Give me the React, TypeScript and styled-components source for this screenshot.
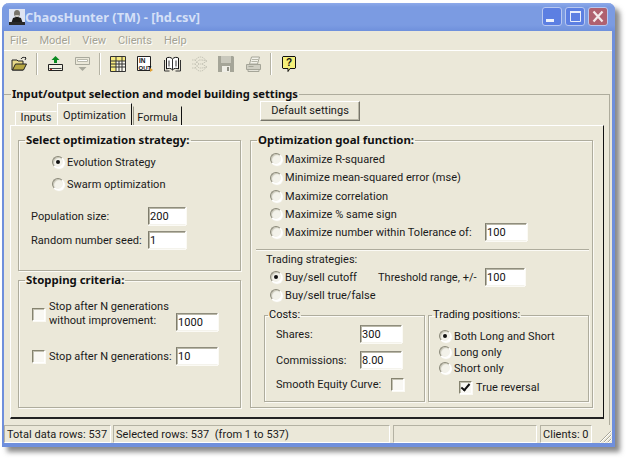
import React from 'react';
import styled, { createGlobalStyle } from 'styled-components';

const Global = createGlobalStyle`
    html, body {
        margin: 0;
        background: #ffffff;
    }
    body {
        font-family: Roboto, "Liberation Sans", sans-serif;
        font-size: 11px;
        letter-spacing: 0.03px;
        color: #1a1a1a;
    }
`;

const Page = styled.div`
    width: 629px;
    height: 462px;
    padding: 3px 0 0 2px;
    box-sizing: border-box;
    overflow: hidden;
`;

const Window = styled.div`
    width: 613px;
    height: 444px;
    box-sizing: border-box;
    display: flex;
    flex-direction: column;
    background: #ebe8d9;
    border-style: solid;
    border-color: #6f8fdc;
    border-width: 0 3px 4px 2px;
    border-radius: 7px 7px 0 0;
    box-shadow: 5px 5px 5px rgba(60, 60, 60, 0.6);
`;

const TitleBar = styled.div`
    height: 27px;
    flex: none;
    margin: 0 -3px 0 -2px;
    padding: 0 7px 1px 7px;
    display: flex;
    align-items: center;
    border-radius: 7px 7px 0 0;
    background: linear-gradient(#8eaaea 0, #7b9be2 4px, #7b9be2 22px, #6f90dc 100%);
`;

const TitleText = styled.span`
    font-family: "Noto Sans", sans-serif;
    font-size: 12.8px;
    font-weight: 700;
    letter-spacing: 0;
    color: #d5e0f7;
`;

const Controls = styled.div`
    margin-left: auto;
    display: flex;
    gap: 3px;
`;

const Control = styled.div<{ $close?: boolean }>`
    width: 20px;
    height: 19px;
    box-sizing: border-box;
    display: flex;
    align-items: center;
    justify-content: center;
    border: 1px solid #b8c8f0;
    border-radius: 3px;
    background: ${(p) => (p.$close ? '#b0616f' : '#5c7fe2')};
`;

const MenuBar = styled.div`
    height: 19px;
    flex: none;
    display: flex;
    gap: 12px;
    padding-left: 6px;
    align-items: center;
`;

const MenuItem = styled.span`
    color: #a3a294;
    text-shadow: 1px 1px 0 #ffffff;
`;

const Toolbar = styled.div`
    height: 37px;
    flex: none;
    box-sizing: border-box;
    border-top: 1px solid #ffffff;
    padding: 5px 0 0 1.5px;
    display: flex;
    align-items: flex-start;
`;

const ToolButton = styled.div`
    width: 27px;
    height: 16px;
    display: flex;
    justify-content: center;
`;

const ToolSep = styled.div`
    width: 1px;
    height: 22px;
    margin: -3px 3.5px 0;
    background: #b5b3a4;
    border-right: 1px solid #ffffff;
`;

const MainGroup = styled.fieldset`
    flex: 1;
    min-height: 0;
    margin: 0 2px 0 0;
    padding: 0 0 0 6px;
    border: none;
    border-top: 1px solid #aeac9d;
    border-right: 1px solid #aeac9d;
    min-width: 0;
`;

const MainLegend = styled.legend`
    margin-left: 1px;
    padding: 0 1px;
    height: 14px;
    line-height: 14px;
    font-family: "Noto Sans", sans-serif;
    font-size: 11.2px;
    font-weight: 700;
    letter-spacing: 0;
    color: #111111;
`;

const TabStrip = styled.div`
    height: 24px;
    display: flex;
    align-items: flex-end;
    padding-left: 5px;
`;

const Tab = styled.div<{ $active?: boolean; $last?: boolean }>`
    box-sizing: border-box;
    text-align: center;
    height: ${(p) => (p.$active ? 22 : p.$last ? 19 : 14)}px;
    line-height: ${(p) => (p.$active ? 23 : p.$last ? 21 : 12)}px;
    width: ${(p) => (p.$active ? 75 : p.$last ? 49 : 42)}px;
    margin-left: ${(p) => (p.$last ? 1 : 0)}px;
    border-top: 1px solid #ffffff;
    border-left: 1px solid #ffffff;
    border-right: 1px solid ${(p) => (p.$active || p.$last ? '#111111' : 'transparent')};
    border-top-color: ${(p) => (p.$last ? 'transparent' : '#ffffff')};
    border-left-color: ${(p) => (p.$last ? '#999888' : '#ffffff')};
`;

const DefaultButton = styled.div`
    margin: 0 0 4px 78px;
    width: 100px;
    height: 20px;
    box-sizing: border-box;
    text-align: center;
    line-height: 18px;
    border: 1px solid;
    border-color: #ffffff #77756a #77756a #ffffff;
    box-shadow: inset -1px -1px 0 #b8b6a6;
`;

const Panel = styled.div`
    width: 594px;
    height: 294px;
    box-sizing: border-box;
    padding: 7px 0 0 7px;
    display: flex;
    gap: 9px;
    border-top: 1px solid #ffffff;
    border-left: 1px solid #ffffff;
    border-right: 1px solid #111111;
    border-bottom: 2px solid #222222;
`;

const Column = styled.div`
    width: 223px;
    display: flex;
    flex-direction: column;
    gap: 2px;
`;

const Group = styled.fieldset<{ $w?: number; $h: number; $pad?: number }>`
    margin: 0;
    min-width: 0;
    width: ${(p) => (p.$w ? `${p.$w}px` : 'auto')};
    height: ${(p) => p.$h}px;
    box-sizing: border-box;
    padding: ${(p) => p.$pad ?? 0}px 0 0 0;
    border: 1px solid #aeac9d;
    box-shadow: 1px 1px 0 #fbfaf5, inset 1px 1px 0 #fbfaf5;
`;

const Legend = styled.legend<{ $plain?: boolean }>`
    margin-left: ${(p) => (p.$plain ? 3 : 6)}px;
    padding: 0 1px;
    height: 14px;
    line-height: 14px;
    font-family: ${(p) => (p.$plain ? 'inherit' : '"Noto Sans", sans-serif')};
    font-size: ${(p) => (p.$plain ? 11 : 11.4)}px;
    font-weight: ${(p) => (p.$plain ? 400 : 700)};
    letter-spacing: 0;
    color: #111111;
`;

const Row = styled.div<{ $h: number; $left: number; $right?: number; $top?: number }>`
    height: ${(p) => p.$h}px;
    margin-top: ${(p) => p.$top ?? 0}px;
    padding-left: ${(p) => p.$left}px;
    padding-right: ${(p) => p.$right ?? 0}px;
    display: flex;
    align-items: center;
`;

const Label = styled.span<{ $w?: number }>`
    flex: none;
    width: ${(p) => (p.$w ? `${p.$w}px` : 'auto')};
    white-space: nowrap;
`;

const Field = styled.input<{ $w: number; $auto?: boolean }>`
    width: ${(p) => p.$w}px;
    height: 18px;
    box-sizing: border-box;
    margin: 0;
    margin-left: ${(p) => (p.$auto ? 'auto' : '0')};
    padding: 1px 0 0 1px;
    font: inherit;
    letter-spacing: inherit;
    color: #111111;
    background: #ffffff;
    outline: none;
    border: 1px solid;
    border-color: #8f8d7d #ffffff #f4f3ec #7e7c6c;
    box-shadow: inset 1px 1px 0 #b9b7a8, 0 1px 0 #fbfaf5, 1px 0 0 #fbfaf5;
`;

const Radio = styled.input.attrs({ type: 'radio', readOnly: true })`
    appearance: none;
    flex: none;
    position: relative;
    width: 12px;
    height: 12px;
    margin: 0 3px 0 0;
    border-radius: 50%;
    border: 1px solid;
    border-color: #8a8878 #ffffff #ffffff #8a8878;
    background: #f3f2ea;
    box-shadow: 1px 1px 1px #ffffff, inset 1px 1px 1px #c6c4b5;
    &:checked::after {
        content: "";
        position: absolute;
        left: 3px;
        top: 3px;
        width: 4px;
        height: 4px;
        border-radius: 50%;
        background: #111111;
    }
`;

const Check = styled.input.attrs({ type: 'checkbox', readOnly: true })`
    appearance: none;
    flex: none;
    position: relative;
    width: 13px;
    height: 13px;
    margin: 0 4px 0 0;
    background: #f9f8f3;
    border: 1px solid;
    border-color: #85836f #ffffff #ffffff #85836f;
    box-shadow: inset 1px 1px 0 #c3c1b2, 1px 1px 0 #fbfaf5;
    &:checked::after {
        content: "";
        position: absolute;
        left: 3px;
        top: 0;
        width: 3px;
        height: 7px;
        border: solid #111111;
        border-width: 0 2px 2px 0;
        transform: rotate(40deg);
    }
`;

const StopRow = styled.div`
    height: 36px;
    padding: 0 22px 0 13px;
    display: flex;
    align-items: flex-start;
`;

const StopCheck = styled(Check)`
    margin-top: 8px;
`;

const StopText = styled.span`
    line-height: 14px;
    white-space: nowrap;
`;

const StopField = styled(Field)`
    margin-top: 13px;
`;

const Divider = styled.div`
    height: 1px;
    margin: 8px 3px 0 5px;
    background: #aeac9d;
    border-bottom: 1px solid #fbfaf5;
`;

const SubGroups = styled.div`
    display: flex;
    gap: 3px;
    margin: 4px 0 0 13px;
`;

const StatusBar = styled.div`
    height: 18px;
    flex: none;
    display: flex;
    gap: 2px;
    align-items: stretch;
`;

const StatusCell = styled.div<{ $w: number; $gap?: number }>`
    width: ${(p) => p.$w}px;
    margin-left: ${(p) => p.$gap ?? 0}px;
    box-sizing: border-box;
    padding-left: 2px;
    line-height: 17px;
    white-space: nowrap;
    border: 1px solid;
    border-color: #b4b2a3 #ffffff #ffffff #b4b2a3;
`;

const Grip = styled.div`
    margin-left: auto;
    align-self: flex-end;
    display: flex;
`;

const Open = () => (
    <svg width="17" height="16" viewBox="0 0 17 16">
        <path d="M1 4h5l1 1h5v9H1z" fill="#e7d98a" stroke="#222" />
        <path d="M1.500 14l3-6h11l-3 6z" fill="#b5a642" stroke="#222" />
        <path d="M10 3c1-2 3-2 5-1m0 0l-1-1m1 1l-1 2" fill="none" stroke="#222" />
    </svg>
);

const Upload = ({ off }: { off?: boolean }) => (
    <svg width="17" height="16" viewBox="0 0 17 16">
        {off ? (
            <>
                <path d="M1.500 1.500h14v7h-14z" fill="#ebe8d9" stroke="#a9a99c" />
                <path d="M3.500 3.500h10v2h-10z" fill="#ffffff" stroke="#b9b9ac" />
                <path d="M8.500 15l-4-4h8z" fill="#a9a99c" />
            </>
        ) : (
            <>
                <path d="M8.500 0l4 4h-2.500v3h-3v-3h-2.500z" fill="#0a8a20" />
                <path d="M1.500 8.500h14v6h-14z" fill="#f3f1e4" stroke="#222" />
                <path d="M2.500 12.500h12" stroke="#444" />
                <path d="M3 13h2v1h-2z" fill="#c02020" />
            </>
        )}
    </svg>
);

const Grid = () => (
    <svg width="16" height="16" viewBox="0 0 16 16">
        <path d="M.5.500h15v15H.5z" fill="#fbfaf0" />
        <path d="M1 1h5v14H1zM6 1h9v4H6z" fill="#f6ea80" />
        <path d="M.5.500h15v15H.5zM.5 5h15M.5 8h15M.5 11h15M6 .5v15M9 5v10.500M12 .5v15" fill="none" stroke="#333" strokeWidth="1" />
    </svg>
);

const InOut = () => (
    <svg width="16" height="16" viewBox="0 0 16 16">
        <path d="M.5.500h13v14H.5z" fill="#fff" stroke="#222" />
        <text x="2" y="7" fontSize="6.500" fontWeight="700" fontFamily="Liberation Sans, sans-serif" fill="#111">IN</text>
        <text x="1.500" y="13.500" fontSize="6" fontWeight="700" fontFamily="Liberation Sans, sans-serif" fill="#111">OUT</text>
        <path d="M13 12l3 2-3 2z" fill="#e0a030" />
    </svg>
);

const Book = () => (
    <svg width="17" height="16" viewBox="0 0 17 16">
        <path d="M8.500 3C7 1 4 1 2.500 2v11c2-1 4.500-1 6 1 1.500-2 4-2 6-1V2C13 1 10 1 8.500 3z" fill="#fff" stroke="#111" />
        <path d="M8.500 3v11M.5 4v11h5M16.500 4v11h-5M5 4.500v6M12 4.500v6" fill="none" stroke="#333" />
    </svg>
);

const Net = () => (
    <svg width="17" height="16" viewBox="0 0 17 16">
        <path d="M1 4h3l4-3h3M1 8h3l4-4h3M1 12h3l4 3h3M4 4l4 4h3M4 8l4 4h3M4 12l4-4M11 1l5 4M11 4l5 1M11 8l5-3M11 8l5 3M11 12l5-1M11 15l5-4" fill="none" stroke="#c6c5b7" strokeDasharray="1.500 .7" />
    </svg>
);

const Disk = () => (
    <svg width="16" height="16" viewBox="0 0 16 16">
        <path d="M0 0h15l1 1v15H0z" fill="#a5a598" />
        <path d="M3 0h10v7H3z" fill="#c9c8bc" />
        <path d="M4 10h8v6H4z" fill="#efeee6" />
        <path d="M9 11h2v4H9z" fill="#8f8f84" />
    </svg>
);

const Printer = () => (
    <svg width="17" height="16" viewBox="0 0 17 16">
        <path d="M4.500 8l2-7h8l-2 7z" fill="#f3f2ea" stroke="#a5a598" />
        <path d="M1.500 8.500h14v5h-14z" fill="#cfcec2" stroke="#a5a598" />
        <path d="M3 13.500h11v2H3zM3.500 10.500h5" fill="#e4e3d9" stroke="#a5a598" />
        <path d="M7 3.500h6M6.500 5.500h6" stroke="#b5b5a8" />
    </svg>
);

const Help = () => (
    <svg width="14" height="16" viewBox="0 0 14 16">
        <path d="M1 .500h12l.5.500v11l-.5.500H8l-2 3v-3H1l-.5-.500V1z" fill="#f5f07a" stroke="#111" />
        <text x="7" y="10" textAnchor="middle" fontSize="10" fontWeight="700" fontFamily="Liberation Sans, sans-serif" fill="#111">?</text>
    </svg>
);

const AppIcon = () => (
    <svg width="16" height="16" viewBox="0 0 16 16">
        <path d="M0 0h16v16H0z" fill="#dfe4f2" />
        <ellipse cx="8" cy="4.500" rx="3" ry="3.500" fill="#77736c" />
        <path d="M6 6h4l-1 3H7z" fill="#c9c6c0" />
        <path d="M2 15l2-6 3-1 2 0 3 1 2 6z" fill="#1c1c1c" />
        <path d="M0 13h16v3H0z" fill="#2a2a2a" />
    </svg>
);

const Minimize = () => (
    <svg width="18" height="17" viewBox="0 0 18 17">
        <path d="M3 11h8v3H3z" fill="#eef2fb" />
    </svg>
);

const Maximize = () => (
    <svg width="18" height="17" viewBox="0 0 18 17">
        <path d="M4.500 3.500h10v10h-10z" fill="none" stroke="#e8eefb" />
        <path d="M4 3h11v2H4z" fill="#e8eefb" />
    </svg>
);

const Close = () => (
    <svg width="18" height="17" viewBox="0 0 18 17">
        <path d="M4.500 3.500l9 10M13.500 3.500l-9 10" stroke="#f4e9ea" strokeWidth="2.200" />
    </svg>
);

const GripIcon = () => (
    <svg width="15" height="15" viewBox="0 0 15 15">
        <path d="M14 3L3 14M14 7L7 14M14 11L11 14" stroke="#a9a798" />
        <path d="M15 3L3 15M15 7L7 15M15 11L11 15" stroke="#ffffff" />
    </svg>
);

const App: React.FC = () => {
    return (
        <Page>
            <Global />
            <Window>
                <TitleBar>
                    <AppIcon />
                    <TitleText>ChaosHunter (TM) - [hd.csv]</TitleText>
                    <Controls>
                        <Control><Minimize /></Control>
                        <Control><Maximize /></Control>
                        <Control $close><Close /></Control>
                    </Controls>
                </TitleBar>
                <MenuBar>
                    <MenuItem>File</MenuItem>
                    <MenuItem>Model</MenuItem>
                    <MenuItem>View</MenuItem>
                    <MenuItem>Clients</MenuItem>
                    <MenuItem>Help</MenuItem>
                </MenuBar>
                <Toolbar>
                    <ToolButton><Open /></ToolButton>
                    <ToolSep />
                    <ToolButton><Upload /></ToolButton>
                    <ToolButton><Upload off /></ToolButton>
                    <ToolSep />
                    <ToolButton><Grid /></ToolButton>
                    <ToolButton><InOut /></ToolButton>
                    <ToolButton><Book /></ToolButton>
                    <ToolButton><Net /></ToolButton>
                    <ToolButton><Disk /></ToolButton>
                    <ToolButton><Printer /></ToolButton>
                    <ToolSep />
                    <ToolButton><Help /></ToolButton>
                </Toolbar>
                <MainGroup>
                    <MainLegend>Input/output selection and model building settings</MainLegend>
                    <TabStrip>
                        <Tab>Inputs</Tab>
                        <Tab $active>Optimization</Tab>
                        <Tab $last>Formula</Tab>
                        <DefaultButton>Default settings</DefaultButton>
                    </TabStrip>
                    <Panel>
                        <Column>
                            <Group $h={138} $pad={4}>
                                <Legend>Select optimization strategy:</Legend>
                                <Row $h={22} $left={33}>
                                    <Radio name="strategy" defaultChecked />
                                    <Label>Evolution Strategy</Label>
                                </Row>
                                <Row $h={22} $left={33}>
                                    <Radio name="strategy" />
                                    <Label>Swarm optimization</Label>
                                </Row>
                                <Row $h={24} $left={12} $top={9}>
                                    <Label $w={117}>Population size:</Label>
                                    <Field $w={38} defaultValue="200" />
                                </Row>
                                <Row $h={24} $left={12}>
                                    <Label $w={117}>Random number seed:</Label>
                                    <Field $w={38} defaultValue="1" />
                                </Row>
                            </Group>
                            <Group $h={135} $pad={13}>
                                <Legend>Stopping criteria:</Legend>
                                <StopRow>
                                    <StopCheck />
                                    <StopText>Stop after N generations<br />without improvement:</StopText>
                                    <StopField $w={42} $auto defaultValue="1000" />
                                </StopRow>
                                <Row $h={18} $left={13} $right={22} $top={11}>
                                    <Check />
                                    <Label>Stop after N generations:</Label>
                                    <Field $w={42} $auto defaultValue="10" />
                                </Row>
                            </Group>
                        </Column>
                        <Group $w={343} $h={275} $pad={3}>
                            <Legend>Optimization goal function:</Legend>
                            <Row $h={18} $left={19}>
                                <Radio name="goal" />
                                <Label>Maximize R-squared</Label>
                            </Row>
                            <Row $h={19} $left={19}>
                                <Radio name="goal" />
                                <Label>Minimize mean-squared error (mse)</Label>
                            </Row>
                            <Row $h={18} $left={19}>
                                <Radio name="goal" />
                                <Label>Maximize correlation</Label>
                            </Row>
                            <Row $h={18} $left={19}>
                                <Radio name="goal" />
                                <Label>Maximize % same sign</Label>
                            </Row>
                            <Row $h={18} $left={19}>
                                <Radio name="goal" />
                                <Label $w={200}>Maximize number within Tolerance of:</Label>
                                <Field $w={42} defaultValue="100" />
                            </Row>
                            <Divider />
                            <Row $h={16} $left={15}>
                                <Label>Trading strategies:</Label>
                            </Row>
                            <Row $h={18} $left={19} $top={1}>
                                <Radio name="trade" defaultChecked />
                                <Label $w={93}>Buy/sell cutoff</Label>
                                <Label $w={107}>Threshold range, +/-</Label>
                                <Field $w={40} defaultValue="100" />
                            </Row>
                            <Row $h={18} $left={19}>
                                <Radio name="trade" />
                                <Label>Buy/sell true/false</Label>
                            </Row>
                            <SubGroups>
                                <Group $w={161} $h={94} $pad={3}>
                                    <Legend $plain>Costs:</Legend>
                                    <Row $h={18} $left={11}>
                                        <Label $w={84}>Shares:</Label>
                                        <Field $w={42} defaultValue="300" />
                                    </Row>
                                    <Row $h={18} $left={11} $top={8}>
                                        <Label $w={84}>Commissions:</Label>
                                        <Field $w={42} defaultValue="8.00" />
                                    </Row>
                                    <Row $h={18} $left={11} $top={6}>
                                        <Label $w={115}>Smooth Equity Curve:</Label>
                                        <Check />
                                    </Row>
                                </Group>
                                <Group $w={161} $h={94} $pad={6}>
                                    <Legend $plain>Trading positions:</Legend>
                                    <Row $h={16} $left={10}>
                                        <Radio name="pos" defaultChecked />
                                        <Label>Both Long and Short</Label>
                                    </Row>
                                    <Row $h={16} $left={10}>
                                        <Radio name="pos" />
                                        <Label>Long only</Label>
                                    </Row>
                                    <Row $h={16} $left={10}>
                                        <Radio name="pos" />
                                        <Label>Short only</Label>
                                    </Row>
                                    <Row $h={18} $left={30} $top={2}>
                                        <Check defaultChecked />
                                        <Label>True reversal</Label>
                                    </Row>
                                </Group>
                            </SubGroups>
                        </Group>
                    </Panel>
                </MainGroup>
                <StatusBar>
                    <StatusCell $w={107}>Total data rows: 537</StatusCell>
                    <StatusCell $w={277}>Selected rows: 537&nbsp; (from 1 to 537)</StatusCell>
                    <StatusCell $w={144} $gap={1}></StatusCell>
                    <StatusCell $w={52} $gap={1}>Clients: 0</StatusCell>
                    <Grip><GripIcon /></Grip>
                </StatusBar>
            </Window>
        </Page>
    );
};

export default App;
